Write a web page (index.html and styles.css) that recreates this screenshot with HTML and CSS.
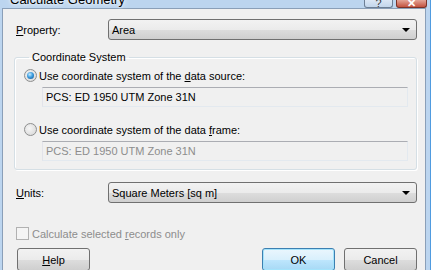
FILE: index.html
```html
<!DOCTYPE html>
<html lang="en">
<head>
    <meta charset="UTF-8">
    <title>Calculate Geometry</title>
    <link rel="stylesheet" href="styles.css">
</head>
<body>
<div class="window">
    <div class="titlebar">
        <span class="title">Calculate Geometry</span>
        <div class="caption-btns">
            <span class="cap-btn help-cap">?</span>
            <span class="cap-btn close-cap">&#x2715;</span>
        </div>
    </div>
    <div class="client">
        <div class="row row-property">
            <label class="lbl"><u>P</u>roperty:</label>
            <div class="combo">
                <span class="combo-text">Area</span>
                <span class="arrow"></span>
            </div>
        </div>

        <fieldset class="group">
            <legend>Coordinate System</legend>
            <div class="option">
                <span class="radio checked"><span class="dot"></span></span>
                <span>Use coordinate system of the <u>d</u>ata source:</span>
            </div>
            <div class="edit">PCS: ED 1950 UTM Zone 31N</div>
            <div class="option option-2">
                <span class="radio"></span>
                <span>Use coordinate system of the data <u>f</u>rame:</span>
            </div>
            <div class="edit disabled">PCS: ED 1950 UTM Zone 31N</div>
        </fieldset>

        <div class="row row-units">
            <label class="lbl"><u>U</u>nits:</label>
            <div class="combo">
                <span class="combo-text">Square Meters [sq m]</span>
                <span class="arrow"></span>
            </div>
        </div>

        <div class="check-row">
            <span class="checkbox"></span>
            <span>Calculate selected <u>r</u>ecords only</span>
        </div>

        <div class="buttons">
            <span class="btn"><u>H</u>elp</span>
            <span class="spacer"></span>
            <span class="btn default">OK</span>
            <span class="btn">Cancel</span>
        </div>
    </div>
</div>
</body>
</html>
```
FILE: styles.css
```css
* {
    box-sizing: border-box;
}

body {
    margin: 0;
    font-family: "Liberation Sans", Arial, sans-serif;
    font-size: 11px;
    color: #000;
}

.window {
    width: 431px;
    height: 270px;
    overflow: hidden;
    background: #bcd5ef;
    padding: 0 4px 0 2px;
    display: flex;
    flex-direction: column;
    border-right: 1px solid #4f9be0;
}

.titlebar {
    height: 11px;
    display: flex;
    align-items: flex-start;
    position: relative;
}

.title {
    margin: -8px 0 0 8px;
    font-size: 13px;
    line-height: 16px;
    text-shadow: 0 0 6px #fff, 0 0 3px #fff;
}

.caption-btns {
    margin-left: auto;
    display: flex;
    gap: 3px;
    margin-right: -1px;
}

.cap-btn {
    height: 8px;
    overflow: hidden;
    border: 1px solid #6d7f95;
    border-top: none;
    border-radius: 0 0 3px 3px;
    display: flex;
    justify-content: center;
    align-items: flex-end;
    font-size: 11px;
    line-height: 8px;
}

.help-cap {
    width: 29px;
    background: linear-gradient(#dbe7f5, #c3d6ec);
    color: #333;
}

.close-cap {
    width: 31px;
    background: linear-gradient(#e4a497, #c3533f);
    border-color: #7b3328;
    color: #fff;
    font-weight: bold;
}

.client {
    flex: 1;
    background: #f0f0f0;
    border: 1px solid #8a9fb8;
    border-bottom: none;
    padding: 10px 8px 0 11px;
    display: flex;
    flex-direction: column;
}

.row {
    display: flex;
    align-items: center;
}

.lbl {
    width: 94px;
    padding-left: 2px;
}

.combo {
    flex: 1;
    height: 21px;
    border: 1px solid #707070;
    border-radius: 3px;
    background: linear-gradient(#f2f2f2 0%, #ebebeb 50%, #dddddd 51%, #cfcfcf 100%);
    display: flex;
    align-items: center;
    padding: 0 6px 0 3px;
}

.combo-text {
    flex: 1;
}

.arrow {
    width: 0;
    height: 0;
    border-left: 4px solid transparent;
    border-right: 4px solid transparent;
    border-top: 4px solid #000;
}

.group {
    margin: 11px 0 0 0;
    padding: 5px 8px 8px 9px;
    border: 1px solid #d5dfe5;
    border-radius: 3px;
    box-shadow: inset 1px 1px 0 #fff, 1px 1px 0 #fff;
    min-width: 0;
}

.group legend {
    padding: 0 3px;
    margin-left: 5px;
}

.option {
    display: flex;
    align-items: center;
    gap: 2px;
    height: 15px;
}

.option-2 {
    margin-top: 15px;
}

.radio {
    width: 13px;
    height: 13px;
    border-radius: 50%;
    border: 1px solid #8e8f8f;
    background: radial-gradient(circle at 40% 40%, #f6f6f6, #d4d4d4);
    display: flex;
    align-items: center;
    justify-content: center;
}

.dot {
    width: 7px;
    height: 7px;
    border-radius: 50%;
    background: radial-gradient(circle at 40% 35%, #c8ecff 0%, #3e9ee0 45%, #0d4f8b 100%);
}

.edit {
    margin: 4px 0 0 18px;
    height: 20px;
    border: 1px solid #e3e9ef;
    border-top-color: #abadb3;
    border-left-color: #e2e3ea;
    background: #f0f0f0;
    padding: 3px 0 0 3px;
}

.edit.disabled {
    color: #8d8d8d;
}

.row-units {
    margin-top: 12px;
}

.check-row {
    margin-top: 24px;
    display: flex;
    align-items: center;
    gap: 3px;
    color: #8d8d8d;
    padding-left: 2px;
}

.checkbox {
    width: 13px;
    height: 13px;
    border: 1px solid #b1b1b1;
    background: #f4f4f4;
}

.buttons {
    margin-top: 8px;
    display: flex;
    gap: 9px;
    padding-left: 3px;
}

.spacer {
    flex: 1;
}

.btn {
    width: 73px;
    height: 23px;
    border: 1px solid #707070;
    border-radius: 3px;
    background: linear-gradient(#f2f2f2 0%, #ebebeb 50%, #dddddd 51%, #cfcfcf 100%);
    display: flex;
    align-items: center;
    justify-content: center;
}

.btn.default {
    border-color: #3c7fb1;
    background: linear-gradient(#eaf6fd 0%, #d9f0fc 50%, #bee6fd 51%, #a7d9f5 100%);
    box-shadow: inset 0 0 0 1px #a4e3fb;
}
```
